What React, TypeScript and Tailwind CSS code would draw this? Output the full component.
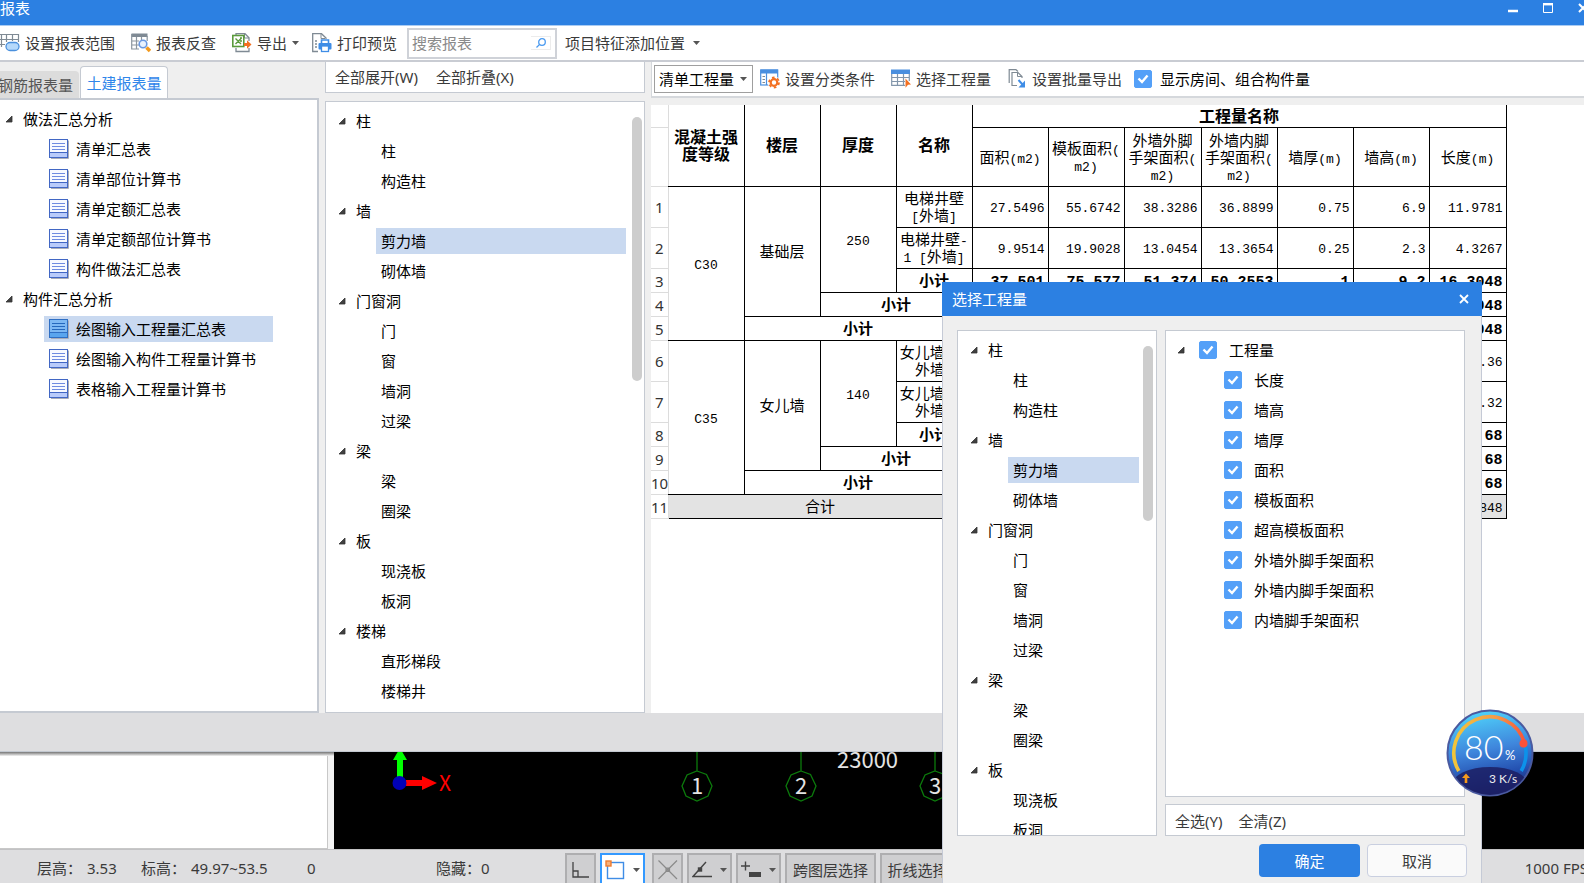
import clsx from "clsx";
import type { ReactNode } from "react";

type TreeGroup = { name: string; items: string[] };

const reportGroups: TreeGroup[] = [
  {
    name: "做法汇总分析",
    items: [
      "清单汇总表",
      "清单部位计算书",
      "清单定额汇总表",
      "清单定额部位计算书",
      "构件做法汇总表",
    ],
  },
  {
    name: "构件汇总分析",
    items: [
      "绘图输入工程量汇总表",
      "绘图输入构件工程量计算书",
      "表格输入工程量计算书",
    ],
  },
];

const componentGroups: TreeGroup[] = [
  { name: "柱", items: ["柱", "构造柱"] },
  { name: "墙", items: ["剪力墙", "砌体墙"] },
  { name: "门窗洞", items: ["门", "窗", "墙洞", "过梁"] },
  { name: "梁", items: ["梁", "圈梁"] },
  { name: "板", items: ["现浇板", "板洞"] },
  { name: "楼梯", items: ["直形梯段", "楼梯井"] },
];

const quantities = [
  "长度",
  "墙高",
  "墙厚",
  "面积",
  "模板面积",
  "超高模板面积",
  "外墙外脚手架面积",
  "外墙内脚手架面积",
  "内墙脚手架面积",
];

const quantityColumns = [
  "面积(m2)",
  "模板面积(\nm2)",
  "外墙外脚\n手架面积(\nm2)",
  "外墙内脚\n手架面积(\nm2)",
  "墙厚(m)",
  "墙高(m)",
  "长度(m)",
];

type SheetCell = { text: string; rowSpan?: number; colSpan?: number };
type SheetRow = {
  kind: "item" | "subtotal" | "total";
  labels: SheetCell[];
  values: string[];
};

const c30Sum = ["37.501", "75.577", "51.374", "50.2553", "1", "9.2", "16.3048"];
const c35Sum = ["", "", "", "", "", "", "32.68"];

const sheetRows: SheetRow[] = [
  {
    kind: "item",
    labels: [
      { text: "C30", rowSpan: 5 },
      { text: "基础层", rowSpan: 4 },
      { text: "250", rowSpan: 3 },
      { text: "电梯井壁\n[外墙]" },
    ],
    values: ["27.5496", "55.6742", "38.3286", "36.8899", "0.75", "6.9", "11.9781"],
  },
  {
    kind: "item",
    labels: [{ text: "电梯井壁-\n1 [外墙]" }],
    values: ["9.9514", "19.9028", "13.0454", "13.3654", "0.25", "2.3", "4.3267"],
  },
  { kind: "subtotal", labels: [{ text: "小计" }], values: c30Sum },
  { kind: "subtotal", labels: [{ text: "小计", colSpan: 2 }], values: c30Sum },
  { kind: "subtotal", labels: [{ text: "小计", colSpan: 3 }], values: c30Sum },
  {
    kind: "item",
    labels: [
      { text: "C35", rowSpan: 5 },
      { text: "女儿墙", rowSpan: 4 },
      { text: "140", rowSpan: 3 },
      { text: "女儿墙-1[\n外墙]" },
    ],
    values: ["", "", "", "", "", "", "17.36"],
  },
  {
    kind: "item",
    labels: [{ text: "女儿墙-2[\n外墙]" }],
    values: ["", "", "", "", "", "", "15.32"],
  },
  { kind: "subtotal", labels: [{ text: "小计" }], values: c35Sum },
  { kind: "subtotal", labels: [{ text: "小计", colSpan: 2 }], values: c35Sum },
  { kind: "subtotal", labels: [{ text: "小计", colSpan: 3 }], values: c35Sum },
  {
    kind: "total",
    labels: [{ text: "合计", colSpan: 4 }],
    values: ["", "", "", "", "", "", "48.9848"],
  },
];

function Expander() {
  return (
    <svg className="size-2 shrink-0" viewBox="0 0 8 8" aria-hidden="true">
      <path d="M7 1V7H1Z" fill="#404040" stroke="#333" strokeWidth="0.8" />
    </svg>
  );
}

function Caret({ className }: { className?: string }) {
  return (
    <svg className={clsx("h-1 w-[7px] shrink-0", className)} viewBox="0 0 7 4" aria-hidden="true">
      <path d="M0 0H7L3.5 4Z" fill="#555" />
    </svg>
  );
}

function ReportIcon({ selected }: { selected: boolean }) {
  return (
    <svg className="size-5 shrink-0" viewBox="0 0 20 20" aria-hidden="true">
      <path d="M19.5 1.5V19.5H2" fill="none" stroke="#a9acb8" />
      <rect x="0.5" y="0.5" width="18" height="18" fill={selected ? "#7db8f3" : "#f7f9ff"} stroke={selected ? "#2f6fc4" : "#4267c4"} />
      <rect x="1" y="13" width="17" height="5" fill={selected ? "#5aa5ee" : "#b9cbfa"} />
      <path d="M1 13.5H18" stroke={selected ? "#2f6fc4" : "#4267c4"} />
      <path d="M3 4.5H16M3 7.5H16M3 10.5H16" stroke={selected ? "#2468bd" : "#6f8be0"} />
    </svg>
  );
}

function ScopeIcon() {
  return (
    <svg className="size-5 shrink-0" viewBox="0 0 20 20" fill="none" aria-hidden="true">
      <path d="M0 1.5H18.500V9M0 6.500H18M0 11.500H5M1.500 1V14M6.500 1V9M12.500 1V8" stroke="#7f8a94" strokeWidth="1.200" />
      <rect x="6" y="9.500" width="13" height="8" rx="4" fill="#b5d9fb" stroke="#4a90dd" strokeWidth="1.300" />
    </svg>
  );
}

function LookupIcon() {
  return (
    <svg className="size-5 shrink-0" viewBox="0 0 20 20" fill="none" aria-hidden="true">
      <path d="M0.500 0.500H16.500V4H0.500Z" fill="#7f8a94" />
      <path d="M0.700 1V16H8M0.700 8H8M0.700 12H8M5.500 4V16M10.500 4V7M16.200 3V8" stroke="#8c969f" strokeWidth="1.200" />
      <circle cx="12" cy="11" r="3.800" fill="#e9f2fd" stroke="#6a98e0" strokeWidth="1.600" />
      <path d="M15.500 14.500L19 18" stroke="#f39a1d" strokeWidth="3.600" />
    </svg>
  );
}

function ExportIcon() {
  return (
    <svg className="size-5 shrink-0" viewBox="0 0 20 20" fill="none" aria-hidden="true">
      <path d="M4 2V0.700H13L17 4.700V8M17 15V18.500H4V15" stroke="#7f8a94" strokeWidth="1.300" />
      <path d="M12.500 1V5H17" stroke="#7f8a94" />
      <rect x="0.800" y="2.500" width="11" height="11" fill="#fff" stroke="#5a9a3c" strokeWidth="1.600" />
      <path d="M3.500 5.500L9 11M9 5.500L3.500 11M8 5H10M8 8H10" stroke="#5a9a3c" strokeWidth="1.400" />
      <path d="M12 10H15V7.200L19.500 11.500L15 15.800V13H12Z" fill="#f37021" />
    </svg>
  );
}

function PrintIcon() {
  return (
    <svg className="size-5 shrink-0" viewBox="0 0 20 20" fill="none" aria-hidden="true">
      <path d="M14 6V5L9.500 0.700H0.700V18.500H6" stroke="#7f8a94" strokeWidth="1.300" />
      <path d="M9 1V5.500H13" stroke="#7f8a94" />
      <path d="M3 8H5M3 11H5M3 14H5" stroke="#7f8a94" strokeWidth="1.500" />
      <path d="M9.500 10V7H16.500V10" stroke="#3f8de6" strokeWidth="1.600" />
      <rect x="6.500" y="10" width="13" height="6.500" rx="1" fill="#3f8de6" />
      <rect x="9.500" y="13" width="7" height="5.500" fill="#fff" stroke="#3f8de6" strokeWidth="1.300" />
    </svg>
  );
}

function ClassifyIcon() {
  return (
    <svg className="size-5 shrink-0" viewBox="0 0 20 20" fill="none" aria-hidden="true">
      <rect x="0.700" y="1" width="17" height="15" fill="#fff" stroke="#4a8fdf" strokeWidth="1.200" />
      <path d="M0.500 0.500H18V4.500H0.500Z" fill="#4a8fdf" />
      <path d="M6.500 4V16" stroke="#4a8fdf" strokeWidth="1.200" />
      <path d="M2.500 7.500H5M2.500 10.500H5M2.500 13.500H5" stroke="#7f8a94" />
      <circle cx="14" cy="13.500" r="6.300" fill="#fff" />
      <circle cx="14" cy="13.500" r="3.300" stroke="#f37021" strokeWidth="2.200" />
      <circle cx="14" cy="13.500" r="5" stroke="#f37021" strokeWidth="1.800" strokeDasharray="2.600 2.636" />
    </svg>
  );
}

function QuantityIcon() {
  return (
    <svg className="size-5 shrink-0" viewBox="0 0 20 20" fill="none" aria-hidden="true">
      <path d="M0.700 1V16.300H14M0.700 8.500H18M0.700 12.500H14M6.500 4V16M12.500 4V16M18.300 3V12" stroke="#8296ab" strokeWidth="1.200" />
      <path d="M0 0.500H19V5H0Z" fill="#4a8fdf" />
      <path d="M14.500 9.500L20 15.500L17 15.700L14.500 18.800Z" fill="#f37021" />
    </svg>
  );
}

function BatchIcon() {
  return (
    <svg className="size-5 shrink-0" viewBox="0 0 20 20" fill="none" aria-hidden="true">
      <path d="M10 16.500H5V3.500H11L15 7.500V9" stroke="#7f8a94" strokeWidth="1.200" />
      <path d="M2.200 14V0.700H9L11 2.500" stroke="#7f8a94" strokeWidth="1.200" />
      <path d="M10.500 3.500V7.500H15" stroke="#7f8a94" />
      <path d="M11.500 11L16 16" stroke="#3f8de6" strokeWidth="2" />
      <path d="M18 11.500V18.500H11.500Z" fill="#3f8de6" />
    </svg>
  );
}

function ToolButton({
  icon,
  caret,
  className,
  children,
}: {
  icon?: ReactNode;
  caret?: boolean;
  className?: string;
  children: ReactNode;
}) {
  return (
    <button type="button" className={clsx("flex shrink-0 items-center gap-[5px] whitespace-nowrap", className)}>
      {icon}
      <span>{children}</span>
      {caret && <Caret />}
    </button>
  );
}

function Checkbox({ id, label, className }: { id: string; label: string; className?: string }) {
  return (
    <div className={clsx("flex items-center", className)}>
      <span className="grid size-[18px] shrink-0">
        <input
          id={id}
          type="checkbox"
          defaultChecked
          className="peer col-start-1 row-start-1 size-[18px] appearance-none rounded-xs border border-[#54a0f8] bg-white checked:bg-[#54a0f8]"
        />
        <svg
          className="pointer-events-none col-start-1 row-start-1 size-[18px] opacity-0 peer-checked:opacity-100"
          viewBox="0 0 18 18"
          fill="none"
          aria-hidden="true"
        >
          <path d="M4.500 8.500L8 12L13.500 5.500" stroke="#fff" strokeWidth="2.400" />
        </svg>
      </span>
      <label htmlFor={id} className="whitespace-nowrap">
        {label}
      </label>
    </div>
  );
}

function ComponentTree({ selected }: { selected: string }) {
  return (
    <ul className="text-black">
      {componentGroups.map((group) => (
        <li key={group.name}>
          <div className="flex h-[30px] items-center gap-2.5">
            <Expander />
            {group.name}
          </div>
          <ul>
            {group.items.map((item) => (
              <li key={item} className="flex h-[30px] items-center pl-[38px]">
                <span
                  className={clsx(
                    "h-[26px] flex-1 pl-[5px] leading-[26px]",
                    item === selected && "bg-[#c9d9f0]",
                  )}
                >
                  {item}
                </span>
              </li>
            ))}
          </ul>
        </li>
      ))}
    </ul>
  );
}

// Latin runs are set smaller so that two of them fill one CJK square.
function SheetText({ text, bold }: { text: string; bold?: boolean }) {
  return text.split(/([ -~]+)/).map((part, i) =>
    /^[ -~]+$/.test(part) ? (
      <span key={i} className={bold ? "text-[15px]" : "text-[13px]"}>
        {part}
      </span>
    ) : (
      part
    ),
  );
}

function Sheet() {
  return (
    <table className="w-[855px] table-fixed border-collapse font-['Liberation_Mono','Noto_Sans_CJK_SC',monospace] text-[15px] leading-[17px] text-black">
      <colgroup>
        <col className="w-[17px]" />
        <col span={6} className="w-[76px]" />
        <col className="w-[77px]" />
        <col span={3} className="w-[76px]" />
        <col className="w-[77px]" />
      </colgroup>
      <thead>
        <tr className="h-[22px] text-[16px]">
          <td className="border-r border-b border-[#dcdcdc]" />
          {["混凝土强\n度等级", "楼层", "厚度", "名称"].map((name) => (
            <th key={name} rowSpan={2} className="whitespace-pre border-x border-b border-black p-0 pt-[5px] font-bold first-of-type:border-l-[#dcdcdc]">
              {name}
            </th>
          ))}
          <th colSpan={7} className="border-x border-b border-black p-0 pt-[5px] leading-4 font-bold">
            工程量名称
          </th>
        </tr>
        <tr className="h-[59px]">
          <td className="border-r border-b border-[#dcdcdc]" />
          {quantityColumns.map((name) => (
            <th key={name} className="whitespace-pre border border-black p-0 pt-[5px] font-normal">
              <SheetText text={name} />
            </th>
          ))}
        </tr>
      </thead>
      <tbody>
        {sheetRows.map((row, i) => (
          <tr
            key={i}
            className={clsx(
              row.kind === "item" ? "h-[41px]" : "h-6",
              row.kind === "subtotal" && "font-bold",
            )}
          >
            <th className="border-r border-b border-[#dcdcdc] p-0 pt-0.5 font-['Noto_Sans',sans-serif] text-[15px] font-normal text-[#333]">
              {i + 1}
            </th>
            {row.labels.map((cell) => (
              <td
                key={cell.text}
                rowSpan={cell.rowSpan}
                colSpan={cell.colSpan}
                className={clsx(
                  "whitespace-pre border border-black p-0 pt-1 text-center",
                  (cell.rowSpan === 5 || cell.colSpan === 4) && "border-l-[#dcdcdc]",
                  row.kind === "total" && "bg-[#e3e3e3]",
                )}
              >
                <SheetText text={cell.text} />
              </td>
            ))}
            {row.values.map((value, k) => (
              <td
                key={k}
                className={clsx(
                  "border border-black p-0 pt-1 pr-[3px] text-right",
                  row.kind === "total" && "bg-[#e3e3e3]",
                )}
              >
                <SheetText text={value} bold={row.kind === "subtotal"} />
              </td>
            ))}
          </tr>
        ))}
      </tbody>
    </table>
  );
}

function ReportPanel() {
  return (
    <aside className="flex w-[319px] shrink-0 flex-col">
      <div className="flex h-9 shrink-0 items-end" role="tablist">
        <button type="button" role="tab" aria-selected="false" className="mr-px flex h-[27px] w-[79px] items-center justify-end rounded-tr-sm bg-[#dcdcdc] pr-1.5 whitespace-nowrap text-[#555]">
          钢筋报表量
        </button>
        <button type="button" role="tab" aria-selected="true" className="h-8 w-[88px] rounded-t-sm border border-b-0 border-[#c5cad2] bg-white whitespace-nowrap text-[#2f86ea]">
          土建报表量
        </button>
      </div>
      <div className="min-h-0 flex-1 overflow-hidden border-y-2 border-r-2 border-[#c5cad2] bg-white pt-1 text-black">
        {reportGroups.map((group) => (
          <div key={group.name}>
            <div className="flex h-[30px] items-center gap-2.5 pl-[5px]">
              <Expander />
              {group.name}
            </div>
            <ul>
              {group.items.map((item) => {
                const selected = item === "绘图输入工程量汇总表";
                return (
                  <li key={item} className="flex h-[30px] items-center pl-11">
                    <div className={clsx("flex h-[26px] w-[229px] items-center gap-[7px] whitespace-nowrap pl-[5px]", selected && "bg-[#c9d9f0]")}>
                      <ReportIcon selected={selected} />
                      {item}
                    </div>
                  </li>
                );
              })}
            </ul>
          </div>
        ))}
      </div>
    </aside>
  );
}

function QuantityDialog() {
  return (
    <section
      role="dialog"
      aria-label="选择工程量"
      className="absolute top-[282px] bottom-0 left-[942px] flex w-[540px] flex-col border-x border-[#c5cad6] bg-[#efefef]"
    >
      <header className="-mx-px flex h-[34px] shrink-0 items-center justify-between bg-[#2c80e2] pr-3 pl-2.5 text-white">
        <h2>选择工程量</h2>
        <button type="button" aria-label="关闭" className="p-px">
          <svg className="size-2.5" viewBox="0 0 10 10" aria-hidden="true">
            <path d="M1 1L9 9M9 1L1 9" stroke="#fff" strokeWidth="1.800" />
          </svg>
        </button>
      </header>
      <div className="flex min-h-0 flex-1 gap-2 pt-3.5 pr-4 pl-[14px]">
        <div className="relative w-[200px] shrink-0 overflow-hidden border border-[#c5cad2] bg-white pt-1 pr-[17px] pl-3">
          <ComponentTree selected="剪力墙" />
          <div className="absolute top-[15px] right-[3px] h-[175px] w-2.5 rounded-full bg-[#cdcdcd]" />
        </div>
        <div className="flex min-w-0 flex-1 flex-col gap-[7px]">
          <div className="min-h-0 flex-1 border border-[#c5cad2] bg-white pt-1 pl-[11px] text-black">
            <div className="flex h-[30px] items-center gap-[14px]">
              <Expander />
              <Checkbox id="q-all" label="工程量" className="gap-3" />
            </div>
            {quantities.map((name, i) => (
              <Checkbox key={name} id={`q-${i}`} label={name} className="h-[30px] gap-3 pl-[47px]" />
            ))}
          </div>
          <div className="flex h-8 shrink-0 items-center gap-4 border border-[#c5cad2] bg-white pt-px pl-[9px]">
            <button type="button">全选(Y)</button>
            <button type="button">全清(Z)</button>
          </div>
        </div>
      </div>
      <footer className="flex shrink-0 justify-end gap-[7px] pt-2 pr-3.5 pb-1.5">
        <button type="button" className="h-[33px] w-[101px] rounded-sm bg-[#2c80e2] text-white">
          确定
        </button>
        <button type="button" className="h-[33px] w-[100px] rounded-sm border border-[#c9cfe0] bg-[#fafafa]">
          取消
        </button>
      </footer>
    </section>
  );
}

function AxisBubble({ x, label }: { x: number; label: string }) {
  return (
    <g>
      <path
        d="M0 -34V-15M0 -15L9.500 -11.500L15 0L11 10L0 15L-11 10L-15 0L-10 -11Z"
        transform={`translate(${x} 34)`}
        fill="none"
        stroke="#0c7a0c"
        strokeWidth="1.300"
      />
      <text x={x} y="42" textAnchor="middle" fontSize="22" fill="#e4e4e4">
        {label}
      </text>
    </g>
  );
}

function Viewport() {
  return (
    <div className="flex h-[97px] shrink-0 bg-[#efefef]">
      <div className="w-[334px] shrink-0 bg-linear-to-b from-[#777] to-[#f4f4f4] to-[4px]">
        <div className="mt-1 mr-1.5 h-[93px] border-r border-b border-[#c8c8c8] bg-white" />
      </div>
      <div className="min-w-0 flex-1 overflow-hidden bg-black">
        <svg
          className="h-[97px] w-[620px] font-['Noto_Sans_CJK_SC',sans-serif]"
          viewBox="0 0 620 97"
          aria-hidden="true"
        >
          <path d="M63 25V8H59L66 -4L73 8H69V25Z" fill="#00ff00" />
          <path d="M72 28H88V24L103 31L88 38V34H72Z" fill="#ff0000" />
          <circle cx="65.500" cy="31" r="7" fill="#0000b8" />
          <text x="105" y="39" fontSize="21" fill="#ff0000">
            X
          </text>
          <AxisBubble x={363} label="1" />
          <AxisBubble x={467} label="2" />
          <AxisBubble x={601} label="3" />
          <text x="503" y="16" fontSize="22" fill="#e4e4e4">
            23000
          </text>
        </svg>
      </div>
    </div>
  );
}

function StatusBar() {
  const box =
    "flex h-[31px] shrink-0 items-center justify-center gap-2 border-2 border-b-0 border-[#aeaeb0] bg-[#cfcfd1]";
  return (
    <footer className="flex h-[34px] shrink-0 items-center overflow-hidden whitespace-nowrap border-t border-[#c2c2c4] bg-[#dedee0] pt-0.5">
      <span className="ml-[37px] w-[50px]">层高：</span>
      <span className="w-[54px]">3.53</span>
      <span className="w-[50px]">标高：</span>
      <span className="w-[116px]">49.97~53.5</span>
      <span className="w-[129px]">0</span>
      <span className="w-[45px]">隐藏：</span>
      <span className="w-[84px]">0</span>
      <div className="flex gap-1 self-start pt-px">
        <button type="button" aria-label="正交" className={clsx(box, "w-[31px]")}>
          <svg className="size-[17px]" viewBox="0 0 17 17" fill="none" stroke="#444" strokeWidth="1.300" aria-hidden="true">
            <path d="M1 1V16H17M1 10H6V16" />
          </svg>
        </button>
        <button type="button" aria-label="矩形选择" className="flex h-[31px] w-[45px] shrink-0 items-center justify-center gap-2 border-2 border-b-0 border-[#3399ff] bg-white">
          <svg className="size-5" viewBox="0 0 20 20" fill="none" aria-hidden="true">
            <rect x="2.500" y="2.500" width="16" height="16" stroke="#3f8de6" strokeWidth="1.400" />
            <rect x="1" y="1" width="5" height="5" fill="#f7b07a" stroke="#ee7d31" strokeWidth="1.400" />
          </svg>
          <Caret />
        </button>
        <button type="button" aria-label="交点" className={clsx(box, "ml-[3px] w-[31px]")}>
          <svg className="size-5" viewBox="0 0 20 20" fill="none" stroke="#8a8a8a" strokeWidth="1.200" aria-hidden="true">
            <path d="M0.500 0.500L19 19M19 0.500L0.500 19M8 8H11.500V11.500H8Z" />
          </svg>
        </button>
        <button type="button" aria-label="角度" className={clsx(box, "w-[45px]")}>
          <svg className="h-[17px] w-5" viewBox="0 0 20 17" fill="none" stroke="#444" strokeWidth="1.400" aria-hidden="true">
            <path d="M14 1L1 15.500H20" />
            <rect x="6.500" y="7" width="3" height="3" fill="#444" />
          </svg>
          <Caret />
        </button>
        <button type="button" aria-label="动态输入" className={clsx(box, "w-[45px]")}>
          <svg className="h-[17px] w-5" viewBox="0 0 20 17" fill="none" stroke="#444" strokeWidth="1.400" aria-hidden="true">
            <path d="M0 5H9M4.500 0.500V9.500" />
            <path d="M8 11H20V16H8Z" fill="#444" stroke="none" />
          </svg>
          <Caret />
        </button>
        <button type="button" className={clsx(box, "w-[91px]")}>
          跨图层选择
        </button>
        <button type="button" className={clsx(box, "w-[75px]")}>
          折线选择
        </button>
      </div>
      <span className="-mr-1 ml-auto">1000 FPS</span>
    </footer>
  );
}

function SpeedBall() {
  return (
    <svg className="absolute top-[709px] left-[1446px] size-[88px]" viewBox="0 0 88 88" fill="none" role="img" aria-label="80% 3K/s">
      <defs>
        <linearGradient id="ball" x1="0.400" y1="0" x2="0.600" y2="1">
          <stop offset="0" stopColor="#4fd3fb" />
          <stop offset="0.450" stopColor="#3f86dc" />
          <stop offset="0.750" stopColor="#2450b0" />
          <stop offset="1" stopColor="#17246e" />
        </linearGradient>
        <linearGradient id="gauge" x1="0" y1="0" x2="1" y2="0">
          <stop offset="0" stopColor="#f2c53a" />
          <stop offset="0.600" stopColor="#f59a48" />
          <stop offset="1" stopColor="#f8553a" />
        </linearGradient>
        <clipPath id="ball-clip">
          <circle cx="44" cy="44" r="42" />
        </clipPath>
      </defs>
      <circle cx="44" cy="44" r="42.500" fill="url(#ball)" stroke="#4a5aa0" strokeWidth="2" />
      <ellipse cx="44" cy="76" rx="38" ry="18" fill="#1c1f63" fillOpacity="0.850" clipPath="url(#ball-clip)" />
      <path d="M12.800 62A36 36 0 1 1 78.500 34" stroke="url(#gauge)" strokeWidth="3.600" />
      <path d="M79.500 38A36 36 0 0 1 75.200 62" stroke="#0c92ea" strokeWidth="3.600" />
      <circle cx="77.500" cy="34.500" r="4" fill="#fb5238" />
      <text x="18" y="51" fontSize="34" fontWeight="300" fill="#fff" fontFamily="Lato, sans-serif">
        80
      </text>
      <text x="59" y="51" fontSize="13" fill="#fff" fontFamily="Lato, sans-serif">
        %
      </text>
      <text x="43" y="74" fontSize="12" fill="#eee" fontFamily="Lato, sans-serif">
        3 K/s
      </text>
      <path d="M20 64.500L24 69H21.300V74H18.700V69H16Z" fill="#f69a1c" />
    </svg>
  );
}

export default function App() {
  return (
    <div className="relative flex h-screen w-full flex-col overflow-hidden bg-[#efefef] font-['Noto_Sans','Noto_Sans_CJK_SC',sans-serif] text-[15px] leading-[18px] text-[#3a3a3a]">
      <header className="flex h-[26px] shrink-0 items-start justify-between overflow-hidden border-b border-[#a9cbf3] bg-[#2c80e2] text-white">
        <h1 className="leading-4">报表</h1>
        <div className="-mr-1 flex gap-[25px] pt-[3px]">
          <button type="button" aria-label="最小化">
            <svg className="size-2.5" viewBox="0 0 10 10" aria-hidden="true">
              <path d="M0 8H10" stroke="#fff" strokeWidth="2.500" />
            </svg>
          </button>
          <button type="button" aria-label="最大化">
            <svg className="size-2.5" viewBox="0 0 10 10" fill="none" aria-hidden="true">
              <path d="M0.500 1V9.500H9.500V1" stroke="#fff" />
              <path d="M0 1.200H10" stroke="#fff" strokeWidth="2.400" />
            </svg>
          </button>
          <button type="button" aria-label="关闭">
            <svg className="size-2.5" viewBox="0 0 10 10" aria-hidden="true">
              <path d="M1 1L9 9M9 1L1 9" stroke="#fff" strokeWidth="2" />
            </svg>
          </button>
        </div>
      </header>

      <nav className="flex h-9 shrink-0 items-center border-b-2 border-[#c9ccd3] bg-white">
        <ToolButton icon={<ScopeIcon />}>设置报表范围</ToolButton>
        <ToolButton icon={<LookupIcon />} className="ml-4">
          报表反查
        </ToolButton>
        <ToolButton icon={<ExportIcon />} className="ml-4" caret>
          导出
        </ToolButton>
        <ToolButton icon={<PrintIcon />} className="ml-[13px]">
          打印预览
        </ToolButton>
        <div className="ml-2.5 flex h-[31px] w-[150px] shrink-0 items-center border-2 border-[#cfd2d8] bg-white pr-1 pl-[3px]">
          <input
            type="search"
            aria-label="搜索报表"
            placeholder="搜索报表"
            className="min-w-0 flex-1 outline-none placeholder:text-[#8a8a8a]"
          />
          <button type="button" aria-label="搜索" className="flex h-[14px] w-5 items-center justify-center border border-l-0 border-[#ececec]">
            <svg className="size-2.5" viewBox="0 0 10 10" fill="none" stroke="#4a9af0" strokeWidth="1.300" aria-hidden="true">
              <circle cx="6" cy="4" r="3.300" />
              <path d="M3.600 6.400L0.500 9.500" />
            </svg>
          </button>
        </div>
        <button type="button" className="ml-2 flex shrink-0 items-center gap-2 whitespace-nowrap">
          项目特征添加位置
          <Caret />
        </button>
      </nav>

      <main className="flex min-h-0 flex-1">
        <ReportPanel />

        <section className="mx-1.5 flex w-[320px] shrink-0 flex-col">
          <div className="flex h-[31px] shrink-0 items-center gap-[18px] border border-t-0 border-[#c5cad2] bg-white pl-[9px]">
            <button type="button">全部展开(W)</button>
            <button type="button">全部折叠(X)</button>
          </div>
          <div className="relative mt-2 min-h-0 flex-1 overflow-hidden border border-[#c5cad2] bg-white pt-1 pr-[18px] pl-3">
            <ComponentTree selected="剪力墙" />
            <div className="absolute top-[15px] right-[2px] h-[264px] w-2.5 rounded-full bg-[#cdcdcd]" />
          </div>
        </section>

        <section className="flex min-w-0 flex-1 flex-col">
          <div className="flex h-9 shrink-0 items-center border-b-2 border-l border-[#d5d8dc] bg-white pl-0.5">
            <div className="grid h-7 w-[99px] shrink-0 items-center border border-[#9f9f9f]">
              <select aria-label="工程量类型" className="col-start-1 row-start-1 appearance-none pl-1 text-black outline-none">
                <option>清单工程量</option>
              </select>
              <Caret className="pointer-events-none col-start-1 row-start-1 mr-[5px] justify-self-end" />
            </div>
            <ToolButton icon={<ClassifyIcon />} className="ml-[7px]">
              设置分类条件
            </ToolButton>
            <ToolButton icon={<QuantityIcon />} className="ml-4">
              选择工程量
            </ToolButton>
            <ToolButton icon={<BatchIcon />} className="ml-4">
              设置批量导出
            </ToolButton>
            <Checkbox id="show-rooms" label="显示房间、组合构件量" className="ml-3 gap-2 text-black" />
          </div>
          <div className="mt-[7px] min-h-0 flex-1 overflow-hidden bg-white">
            <Sheet />
          </div>
        </section>
      </main>

      <div className="h-[39px] shrink-0 border-b border-[#c2c8d0] bg-[#dedee0]" />
      <Viewport />
      <StatusBar />

      <QuantityDialog />
      <SpeedBall />
    </div>
  );
}
